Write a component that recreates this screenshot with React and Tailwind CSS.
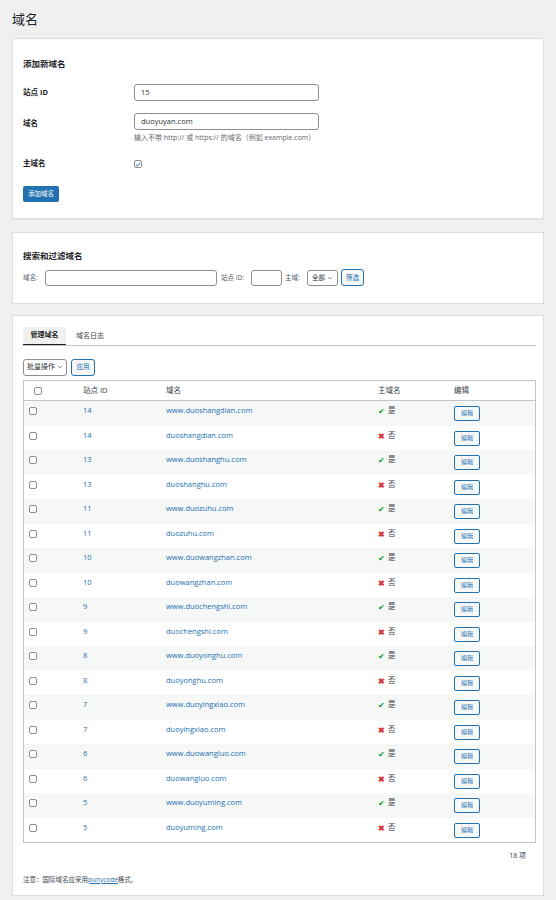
import React from 'react';

const rows = [
  [14, 'www.duoshangdian.com', true],
  [14, 'duoshangdian.com', false],
  [13, 'www.duoshanghu.com', true],
  [13, 'duoshanghu.com', false],
  [11, 'www.duozuhu.com', true],
  [11, 'duozuhu.com', false],
  [10, 'www.duowangzhan.com', true],
  [10, 'duowangzhan.com', false],
  [9, 'www.duochengshi.com', true],
  [9, 'duochengshi.com', false],
  [8, 'www.duoyonghu.com', true],
  [8, 'duoyonghu.com', false],
  [7, 'www.duoyingxiao.com', true],
  [7, 'duoyingxiao.com', false],
  [6, 'www.duowangluo.com', true],
  [6, 'duowangluo.com', false],
  [5, 'www.duoyuming.com', true],
  [5, 'duoyuming.com', false],
];

const Box = ({ checked = false }) => (
  <span className="w-[8px] h-[8px] rounded-[2px] border border-[#8c8f94] bg-white flex items-center justify-center">
    {checked && (
      <svg viewBox="0 0 10 10" className="w-[7px] h-[7px]">
        <path d="M1.5 5.2 L4 7.6 L8.6 2" fill="none" stroke="#2271b1" strokeWidth="1.6" />
      </svg>
    )}
  </span>
);

const Chevron = () => (
  <svg viewBox="0 0 10 10" className="w-[6px] h-[6px]">
    <path d="M2 3.5 L5 6.5 L8 3.5" fill="none" stroke="#50575e" strokeWidth="1.2" />
  </svg>
);

export default function App() {
  return (
    <div
      className="w-[556px] min-h-[900px] bg-[#f0f0f1] text-[#3c434a] text-[7.5px] px-[12px] pt-[10px] pb-[5px]"
      style={{ fontFamily: '"Open Sans", "Noto Sans CJK SC", sans-serif' }}
    >
      <h1 className="text-[13px] leading-[18px] text-[#1d2327] mb-[10px]">域名</h1>

      {/* add form */}
      <div className="bg-white border border-[#dcdcde] shadow-[0_1px_1px_rgba(0,0,0,0.04)] h-[181px] px-[10px] pt-[18px]">
        <h2 className="text-[8.5px] font-bold text-[#1d2327] leading-[14px] mb-[13px]">添加新域名</h2>
        <div className="flex items-center h-[17px]">
          <span className="w-[111px] font-bold text-[#1d2327]">站点 ID</span>
          <div className="w-[185px] h-[17px] border border-[#8c8f94] rounded-[3px] flex items-center px-[6px] text-[#2c3338]">15</div>
        </div>
        <div className="flex items-start mt-[12px]">
          <span className="w-[111px] font-bold text-[#1d2327] leading-[17px] pt-[2px]">域名</span>
          <div className="flex flex-col">
            <div className="w-[185px] h-[17px] border border-[#8c8f94] rounded-[3px] flex items-center px-[6px] text-[#2c3338]">duoyuyan.com</div>
            <span className="text-[7px] text-[#646970] leading-[10px] mt-[3px]">输入不带 http:// 或 https:// 的域名（例如 example.com）</span>
          </div>
        </div>
        <div className="flex items-center mt-[16px] h-[10px]">
          <span className="w-[111px] font-bold text-[#1d2327]">主域名</span>
          <Box checked />
        </div>
        <button className="mt-[17px] h-[16px] w-[36px] bg-[#2271b1] rounded-[2px] text-white text-[6.5px] flex items-center justify-center">添加域名</button>
      </div>

      {/* filter */}
      <div className="bg-white border border-[#dcdcde] mt-[13px] h-[72px] px-[10px] pt-[16px]">
        <h2 className="text-[8.5px] font-bold text-[#1d2327] leading-[14px] mb-[6px]">搜索和过滤域名</h2>
        <div className="flex items-center h-[17px] text-[6.5px] text-[#50575e]">
          <span className="w-[22px]">域名:</span>
          <div className="w-[172px] h-[16px] border border-[#8c8f94] rounded-[3px] bg-white" />
          <span className="ml-[4px] w-[30px]">站点 ID:</span>
          <div className="w-[31px] h-[16px] border border-[#8c8f94] rounded-[3px] bg-white" />
          <span className="ml-[3px] w-[22px]">主域:</span>
          <div className="w-[31px] h-[16px] border border-[#8c8f94] rounded-[3px] flex items-center justify-between px-[4px] text-[#2c3338]">
            全部 <Chevron />
          </div>
          <div className="ml-[3px] w-[23px] h-[17px] border border-[#2271b1] rounded-[3px] bg-[#f6f7f7] text-[#2271b1] flex items-center justify-center">筛选</div>
        </div>
      </div>

      {/* list */}
      <div className="bg-white border border-[#dcdcde] mt-[11px] h-[581px] px-[10px] pt-[11px]">
        <div className="flex border-b border-[#c3c4c7] h-[19px] w-[513px]">
          <div className="w-[43px] bg-[#f0f0f1] border-b-[1.5px] border-[#1d2327] flex items-center justify-center text-[7px] font-semibold text-[#1d2327]">管理域名</div>
          <div className="ml-[10px] flex items-center text-[7px] text-[#3c434a]">域名日志</div>
        </div>

        <div className="flex items-center mt-[12px] h-[18px]">
          <div className="w-[44px] h-[17px] border border-[#8c8f94] rounded-[3px] flex items-center justify-between px-[3px] text-[#2c3338] text-[7px]">
            批量操作 <Chevron />
          </div>
          <div className="ml-[4px] w-[24px] h-[17px] border border-[#2271b1] rounded-[3px] bg-[#f6f7f7] text-[#2271b1] flex items-center justify-center text-[6.5px]">应用</div>
        </div>

        <div className="mt-[4px] w-[513px] border border-[#c3c4c7]">
          <div className="grid grid-cols-[59px_83px_212px_76px_1fr] h-[20px] items-center border-b border-[#c3c4c7] text-[#3c434a]">
            <span className="pl-[10px]"><Box /></span>
            <span>站点 ID</span>
            <span>域名</span>
            <span>主域名</span>
            <span>编辑</span>
          </div>
          {rows.map(([id, d, main], i) => (
            <div
              key={d}
              className={`grid grid-cols-[59px_83px_212px_76px_1fr] h-[24.5px] items-start ${i % 2 === 0 ? 'bg-[#f6f7f7]' : 'bg-white'}`}
            >
              <span className="pl-[5px] pt-[6px]"><Box /></span>
              <span className="pt-[4px] text-[#2271b1] leading-[11px]">{id}</span>
              <span className="pt-[4px] text-[#2271b1] leading-[11px]">{d}</span>
              <span className="pt-[4px] leading-[11px] flex items-center gap-[3px]">
                {main ? (
                  <span className="text-[#00a32a] text-[8px] leading-[11px]">✔</span>
                ) : (
                  <span className="text-[#d63638] text-[8px] leading-[11px] font-bold">✖</span>
                )}
                <span className="text-[#3c434a]">{main ? '是' : '否'}</span>
              </span>
              <span className="pt-[5px]">
                <span className="w-[26px] h-[15px] border border-[#2271b1] rounded-[2px] bg-[#f6f7f7] text-[#2271b1] text-[6px] flex items-center justify-center">编辑</span>
              </span>
            </div>
          ))}
        </div>

        <div className="w-[513px] flex justify-end pr-[10px] mt-[8px] text-[7px] text-[#3c434a]">18 项</div>
        <p className="mt-[13px] text-[6.5px] text-[#3c434a]">
          注意：国际域名应采用<span className="text-[#2271b1] underline">punycode</span>格式。
        </p>
      </div>
    </div>
  );
}
